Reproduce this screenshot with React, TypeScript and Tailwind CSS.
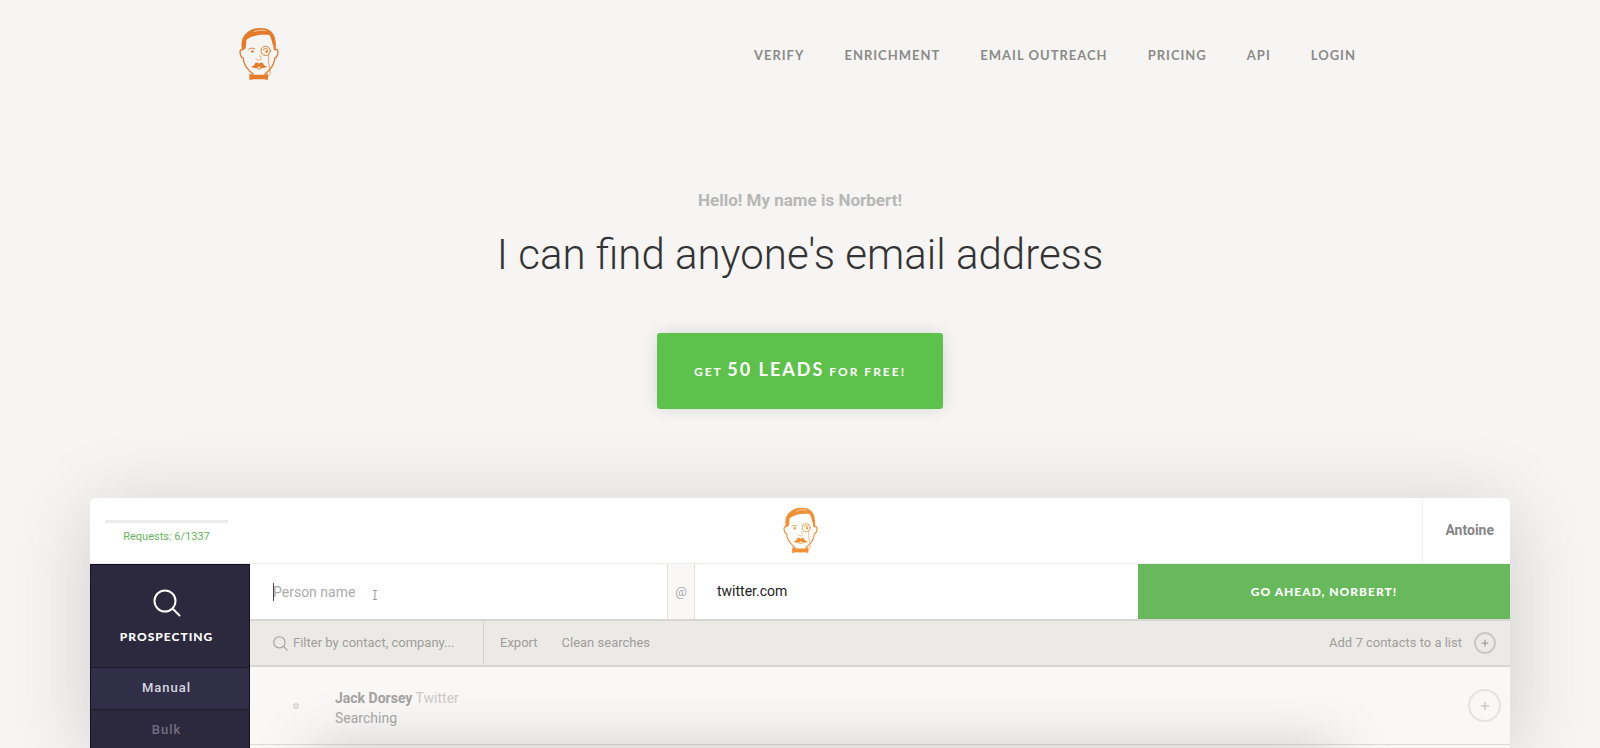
import React from 'react';
import { Plus } from 'lucide-react';

const navLinks = ['Verify', 'Enrichment', 'Email Outreach', 'Pricing', 'API', 'Login'];

function NorbertLogo({ className }: { className: string }) {
    return (
        <svg viewBox="58 36 120 160" className={className} fill="none" stroke="currentColor" strokeLinecap="round" strokeLinejoin="round" aria-hidden="true">
            {/* Head and ears */}
            <path strokeWidth="4" d="M69 104c-6-2-9 4-8 11 1 8 4 13 9 14 1 15 7 27 18 38l12 11M167 104c6-2 9 4 8 11-1 8-4 13-9 14-1 15-7 27-18 38l-12 11" />
            {/* Hair */}
            <path fill="currentColor" stroke="none" d="M67 107c-4-20-2-36 9-48 10-13 26-20 44-20 24-1 38 9 44 24 5 13 6 28 4 44l-6-2c0-5 0-10-2-16l-2-4c-2-12-5-20-9-25-24-3-50 1-68 14-2 4-2 8-1 12-1 5-2 9-2 14-3 3-7 5-11 7z" />
            <path stroke="#f6f5f3" strokeWidth="2" d="M104 50c12-5 24-6 34-3" />
            {/* Eyes and monocle */}
            <path strokeWidth="3" d="M87 104c4-5 12-6 18-2M131 104c4-4 9-4 13-1" />
            <circle cx="98" cy="110" r="4" fill="currentColor" stroke="none" />
            <circle cx="141" cy="110" r="4" fill="currentColor" stroke="none" />
            <circle cx="138" cy="108" r="14" strokeWidth="3" />
            <path strokeWidth="2" d="M147 120c-4 20 5 40 5 53 0 8-3 11-7 12" />
            {/* Nose */}
            <path strokeWidth="2" d="M109 132c2 5 7 2 10 5 3 0 6-3 4-9l-2-6" />
            {/* Moustache */}
            <path fill="currentColor" stroke="none" d="M118 147c-5-6-11-4-14 2-2 5-5 6-10 5 5 8 18 8 24 1 6 7 19 7 25-1-5 1-8 0-11-5-3-6-9-8-14-2z" />
            <path strokeWidth="3" d="M112 161c4 3 9 3 13 0" />
            {/* Bow tie */}
            <path fill="currentColor" stroke="none" d="M89 176c9 4 16 5 22 4h14c7 1 13 0 20-4v20c-8-3-14-3-20-2h-14c-7-1-14 0-22 2z" />
        </svg>
    );
}

function SearchIcon({ className }: { className: string }) {
    return (
        <svg viewBox="0 0 28 28" className={className} fill="none" stroke="currentColor" strokeWidth="2" strokeLinecap="round" aria-hidden="true">
            <circle cx="12" cy="12" r="10.5" />
            <path d="M20 20l6.5 6.5" />
        </svg>
    );
}

function Header() {
    return (
        <header className="w-full max-w-[1122px] mx-auto pt-[27px] flex items-start justify-between">
            <a href="#" aria-label="Norbert home">
                <NorbertLogo className="w-10 h-[53px] text-[#e37b2a]" />
            </a>
            <nav className="flex gap-10 pt-[18px] pr-[5px] text-[13px] leading-5 font-bold uppercase tracking-[1px] text-[#8b8b88]">
                {navLinks.map((link) => (
                    <a key={link} href="#" className="hover:text-gray-900">
                        {link}
                    </a>
                ))}
            </nav>
        </header>
    );
}

function Hero() {
    return (
        <section className="pt-[108px] flex flex-col items-center">
            <p className="font-[Roboto] text-[17px] leading-6 font-bold text-[#b7b7b5]">Hello! My name is Norbert!</p>
            <h1 className="mt-4 font-[Roboto] text-[42px] leading-[54px] font-light text-[#333]">
                I can find anyone's email address
            </h1>
            <button
                type="button"
                className="mt-[51px] h-[76px] px-[37px] pb-1 rounded-[3px] bg-[#5ec14b] text-white text-[12px] font-bold tracking-[2px] shadow-[0_0_16px_rgba(0,0,0,0.12)]"
            >
                GET <span className="text-[18px]">50 LEADS</span> FOR FREE!
            </button>
        </section>
    );
}

function Sidebar() {
    return (
        <aside className="w-40 shrink-0 flex flex-col border border-b-0 border-[#14121f] bg-[#2c293e] text-center">
            <a href="#" className="h-[102px] pt-6 pr-[7px] flex flex-col items-center text-white">
                <SearchIcon className="w-7 h-7" />
                <span className="mt-2 text-[12px] leading-6 font-black tracking-[1px]">PROSPECTING</span>
            </a>
            <a href="#" className="h-[43px] pr-[7px] border-y border-[#1d1b2c] bg-[#312f48] font-[Roboto] text-[13px] leading-10 font-medium tracking-[1px] text-[#d8d7e0]">
                Manual
            </a>
            <a href="#" className="h-[38px] pr-[7px] font-[Roboto] text-[13px] leading-10 font-medium tracking-[1px] text-[#716f80]">
                Bulk
            </a>
        </aside>
    );
}

function SearchForm() {
    return (
        <form className="h-[57px] flex border-b-2 border-[#d9d5d3]" onSubmit={(e) => e.preventDefault()}>
            <div className="relative flex-1">
                <input
                    aria-label="Person name"
                    placeholder="Person name"
                    className="w-full h-full pl-[23px] bg-white text-[14px] text-black placeholder:text-[#acacac] outline-none"
                />
                {/* Caret and text cursor */}
                <span className="absolute left-[23px] top-[19px] w-px h-[18px] bg-[#444]" />
                <svg viewBox="0 0 6 10" className="absolute left-[122px] top-[26px] w-[6px] h-[10px]" fill="none" stroke="#999" aria-hidden="true">
                    <path d="M1 .5h4M1 9.5h4M3 .5v9" />
                </svg>
            </div>
            <label htmlFor="domain" className="w-7 flex items-center justify-center border-x border-[#e4e1df] bg-[#f9f8f7] text-[13px] text-[#aaa]">
                @
            </label>
            <input
                id="domain"
                defaultValue="twitter.com"
                className="w-[443px] pl-[22px] bg-white text-[14px] text-[#222] outline-none"
            />
            <button type="submit" className="w-[372px] bg-[#67b95c] font-[Lato] text-[12px] font-black tracking-[1px] text-white">
                GO AHEAD, NORBERT!
            </button>
        </form>
    );
}

function Toolbar() {
    return (
        <div className="h-[46px] flex items-center border-b-2 border-[#d8d6d3] bg-[#eceae7] text-[13px] text-[#a09d9b]">
            <label className="w-[234px] h-full pl-[23px] flex items-center gap-[5px] border-r border-[#d3d1ce]">
                <SearchIcon className="w-[15px] h-[15px] shrink-0" />
                <input
                    aria-label="Filter contacts"
                    placeholder="Filter by contact, company..."
                    className="w-full bg-transparent placeholder:text-[#a09d9b] outline-none"
                />
            </label>
            <button type="button" className="ml-4">Export</button>
            <button type="button" className="ml-6">Clean searches</button>
            <button type="button" className="ml-auto mr-[14px] flex items-center gap-3">
                Add 7 contacts to a list
                <span className="size-[22px] flex items-center justify-center rounded-full border-2 border-[#cbc8c6]">
                    <Plus className="size-[10px]" strokeWidth={3} />
                </span>
            </button>
        </div>
    );
}

function ContactRow() {
    return (
        <div className="h-[78px] flex items-center border-b border-[#dddbd9]">
            <span className="ml-[43px] size-[6px] rounded-full border-2 border-[#d8d7d5]" />
            <div className="ml-9 pt-1 text-[14px] leading-5 text-[#aaa9a7]">
                <p>
                    <strong className="text-[#a3a2a0]">Jack Dorsey</strong> <span className="text-[#cbcac8]">Twitter</span>
                </p>
                <p>Searching</p>
            </div>
            <button
                type="button"
                aria-label="Add Jack Dorsey to a list"
                className="ml-auto mr-[9px] size-[33px] flex items-center justify-center rounded-full border-2 border-[#e4e3e1] text-[#c8c7c5]"
            >
                <Plus className="size-3" strokeWidth={3} />
            </button>
        </div>
    );
}

function AppPreview() {
    return (
        <section className="mt-[89px] mx-[90px] flex-1 flex flex-col rounded-t-[6px] overflow-hidden bg-white shadow-[0_10px_80px_rgba(0,0,0,0.16)]">
            <div className="h-[66px] grid grid-cols-[1fr_auto_1fr] border-b border-[#f1eceb]">
                <div className="pl-[15px] pt-[22px]">
                    <div className="w-[123px] h-[3px] bg-[#ececec]" />
                    <p className="mt-1 w-[123px] text-center font-[Roboto] text-[11px] leading-5 text-[#67b45c]">Requests: 6/1337</p>
                </div>
                <NorbertLogo className="mt-[9px] w-[35px] h-[46px] text-[#ee9036]" />
                <div className="justify-self-end w-[88px] flex items-center justify-end pr-4 border-l border-[#f0efee] font-[Roboto] text-[14px] font-bold text-[#858585]">
                    Antoine
                </div>
            </div>
            <div className="flex-1 flex">
                <Sidebar />
                <div className="relative flex-1 flex flex-col overflow-hidden bg-[#f9f8f6] font-[Roboto]">
                    <SearchForm />
                    <Toolbar />
                    <ContactRow />
                    {/* Shadow cast by the dialog that rises from below */}
                    <div className="absolute left-[60px] right-[170px] top-full h-20 shadow-[0_0_60px_rgba(0,0,0,0.18)]" />
                </div>
            </div>
        </section>
    );
}

export default function App() {
    return (
        <div className="min-h-screen flex flex-col overflow-hidden bg-[#f6f5f3] font-[Lato,sans-serif]">
            <Header />
            <Hero />
            <AppPreview />
        </div>
    );
}
